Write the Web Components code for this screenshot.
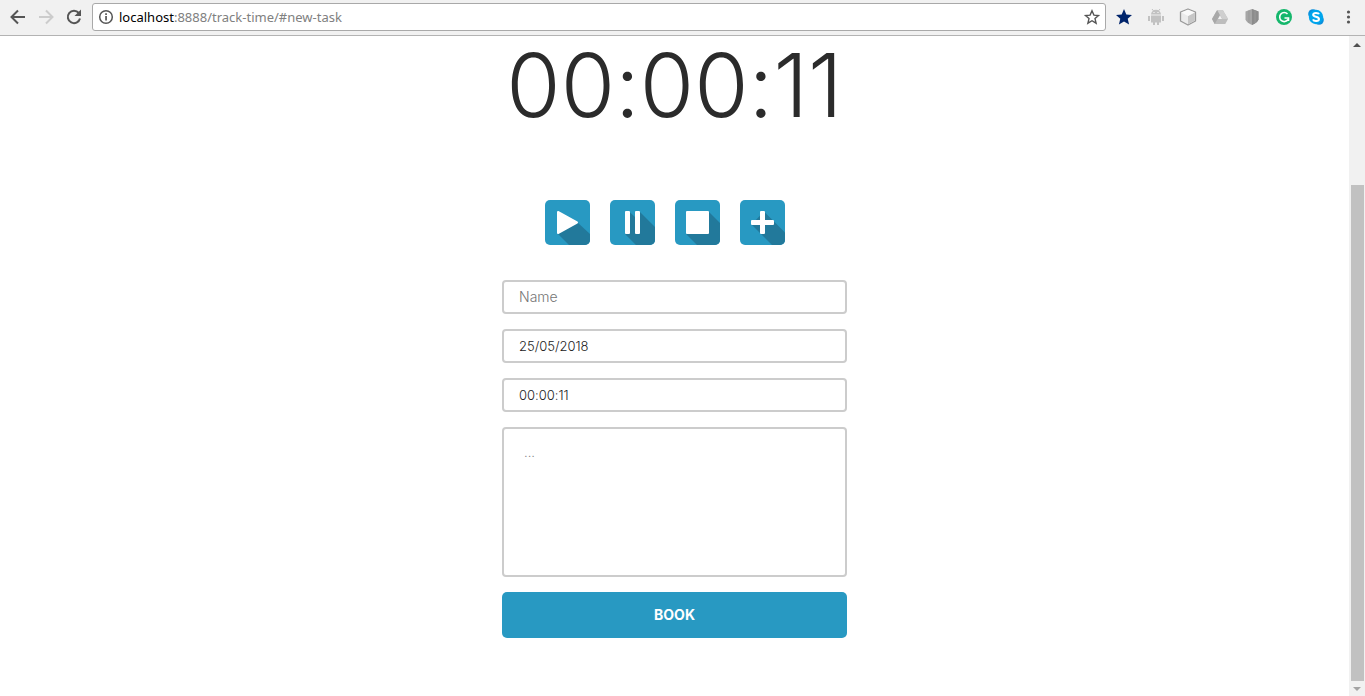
<!DOCTYPE html>
<html lang="en">
<head>
<meta charset="utf-8">
<title>Track time</title>
<style>
html, body { height: 100%; }
body { margin: 0; background: #fff; font-family: Inter, "Open Sans", sans-serif; color: #2b2b2b; }
</style>
</head>
<body>
<app-window>
  <browser-bar slot="bar"></browser-bar>
  <track-timer>00:00:11</track-timer>
  <timer-controls></timer-controls>
  <task-form></task-form>
</app-window>
<script>
const define = (name, html) => customElements.define(name, class extends HTMLElement {
  constructor() {
    super();
    const t = document.createElement('template');
    t.innerHTML = html;
    this.attachShadow({ mode: 'open' }).append(t.content.cloneNode(true));
  }
});

define('app-window', `
<style>
:host { display: flex; flex-direction: column; height: 100vh; overflow: hidden; }
.view { display: flex; flex: 1; min-height: 0; }
main { flex: 1; min-width: 0; overflow: hidden; display: flex; flex-direction: column; align-items: center; }
</style>
<slot name="bar"></slot>
<div class="view"><main><slot></slot></main><scroll-rail></scroll-rail></div>`);

define('scroll-rail', `
<style>
:host { display: flex; flex-direction: column; align-items: center; width: 16px; background: #f1f1f1; }
svg { display: block; width: 16px; height: 16px; flex: none; }
.down { height: 15px; }
.before { flex: 133; }
.thumb { flex: 496; width: 13px; background: #c1c1c1; }
</style>
<svg viewBox="0 0 16 16"><path d="M4 11L8 7L12 11Z" fill="#505050"/></svg>
<div class="before"></div><div class="thumb"></div>
<svg class="down" viewBox="0 0 16 15"><path d="M4 6L8 10L12 6Z" fill="#a3a3a3"/></svg>`);

define('browser-bar', `
<style>
:host { display: flex; align-items: center; height: 35px; flex: none; background: #f1f1f1; border-bottom: 1px solid #b3b3b3; }
nav { display: flex; gap: 8px; padding: 0 8px; }
button { display: block; border: 0; padding: 0; background: none; width: 20px; height: 20px; }
svg { display: block; width: 20px; height: 20px; }
.address { flex: 1; min-width: 0; box-sizing: border-box; display: flex; align-items: center; height: 28px; margin-bottom: 1px; background: #fff; border: 1px solid #a9a9a9; border-radius: 3px; padding: 0 3px; }
.url { flex: 1; color: #808080; font: 13px/24px "Noto Sans", sans-serif; padding: 0 0 1px 3px; }
.url b { color: #000; font-weight: 400; }
nav, .tools { margin-bottom: 1px; }
.tools { display: flex; gap: 12px; padding: 0 7px 0 8px; }
</style>
<nav>
<button aria-label="Back"><svg viewBox="0 0 20 20" fill="none" stroke="#555" stroke-width="2"><path d="M17 10H4M10 3.5L3.5 10L10 16.5"/></svg></button>
<button aria-label="Forward"><svg viewBox="0 0 20 20" fill="none" stroke="#ccc" stroke-width="2"><path d="M3 10H16M10 3.5L16.5 10L10 16.5"/></svg></button>
<button aria-label="Reload"><svg viewBox="0 0 20 20"><path d="M14.8 6A6.2 6.2 0 1 0 16 11.5" fill="none" stroke="#555" stroke-width="2"/><path d="M17 2.5V9H10.5Z" fill="#555"/></svg></button>
</nav>
<div class="address">
<svg viewBox="0 0 20 20"><circle cx="10" cy="10" r="6.3" fill="none" stroke="#555" stroke-width="1.5"/><path d="M9.2 9h1.7v4.5H9.2zM9.2 6.2h1.7v1.7H9.2z" fill="#555"/></svg>
<span class="url"><b>localhost</b>:8888/track-time/#new-task</span>
<button aria-label="Bookmark"><svg viewBox="0 0 20 20"><path d="M10 3.8L11.9 8.1L16.5 8.5L13 11.6L14.1 16.2L10 13.7L5.9 16.2L7 11.6L3.5 8.5L8.1 8.1Z" fill="none" stroke="#555" stroke-width="1.4"/></svg></button>
</div>
<div class="tools">
<button aria-label="Favourites"><svg viewBox="0 0 20 20"><path d="M10 2L12.3 7.5L18 8L13.7 11.8L15.1 17.6L10 14.5L4.9 17.6L6.3 11.8L2 8L7.7 7.5Z" fill="#00246b"/></svg></button>
<button aria-label="Android"><svg viewBox="0 0 20 20" fill="#c2c2c2"><path d="M5 7.5A5 4.7 0 0 1 15 7.5ZM5 8.5H15V15.5H13V18H11V15.5H9V18H7V15.5H5ZM2 9H4V14H2ZM16 9H18V14H16Z"/><path d="M6 2L8 4.5M14 2L12 4.5" stroke="#c2c2c2"/><path d="M7.5 5h1v1h-1zM11.5 5h1v1h-1z" fill="#fff"/></svg></button>
<button aria-label="Box"><svg viewBox="0 0 20 20" stroke="#999" stroke-width="1.3" stroke-linejoin="round"><path d="M10 2L17.5 5V14L10 18L2.5 14V5Z" fill="#ececec"/><path d="M10 9V17.2L16.800 13.500V5.500Z" fill="#c7c7c7" stroke="none"/><path d="M3.500 5.500L10 9L16.500 5.500L10 2.800Z" fill="#fafafa" stroke="none"/></svg></button>
<button aria-label="Drive"><svg viewBox="0 0 20 20"><path d="M7.2 3H12.8L18 12L15.3 17H4.7L2 12Z" fill="#bdbdbd"/><path d="M7.2 3L10 8L4.7 17L2 12Z" fill="#a8a8a8"/><path d="M7.2 3H12.8L18 12H12.4Z" fill="#cfcfcf"/><path d="M10 8.5L12 12H8Z" fill="#f1f1f1"/></svg></button>
<button aria-label="Shield"><svg viewBox="0 0 20 20"><path d="M10 2L16.5 4.5V12.5Q15.5 15.5 10 18Q4.500 15.5 3.500 12.500V4.500Z" fill="#a6a6a6"/><path d="M10 2L16.500 4.500V12.500Q15.500 15.500 10 18Z" fill="#8c8c8c"/><path d="M7 3.500V16M13 3.500V16" stroke="#999"/></svg></button>
<button aria-label="Grammar"><svg viewBox="0 0 20 20"><circle cx="10" cy="10" r="8" fill="#15b76c"/><path d="M13.500 7A4.500 4.500 0 1 0 14 12.500M10.500 11H14.500V14" fill="none" stroke="#fff" stroke-width="1.600"/></svg></button>
<button aria-label="Skype"><svg viewBox="0 0 20 20"><circle cx="7" cy="7" r="4.800" fill="#0b8fdc"/><circle cx="13" cy="13" r="4.800" fill="#0b8fdc"/><circle cx="10" cy="10" r="7.200" fill="#00a5ec"/><path d="M13 7.300C12.500 5.800 7.400 5.200 7.200 7.700C7.100 10.200 13 9.200 13 12C13 14.700 7.700 14.700 7 12.400" fill="none" stroke="#fff" stroke-width="2"/></svg></button>
<button aria-label="Menu"><svg viewBox="0 0 20 20" fill="#555"><circle cx="10.500" cy="5" r="1.600"/><circle cx="10.500" cy="10" r="1.600"/><circle cx="10.500" cy="15" r="1.600"/></svg></button>
</div>`);

define('track-timer', `
<style>
:host { display: block; font-size: 88px; line-height: 98px; font-weight: 300; font-feature-settings: "calt" 0; }
</style><slot></slot>`);

define('timer-controls', `
<style>
:host { display: flex; padding: 66px 0 35px; }
button { display: block; width: 45px; height: 45px; margin-right: 20px; padding: 0; border: 0; border-radius: 5px; background: #2899c2; overflow: hidden; }
svg { display: block; width: 45px; height: 45px; }
.shade { fill: #22799b; }
.mark { fill: #fff; stroke: #fff; stroke-width: 2; stroke-linejoin: round; }
</style>
<button aria-label="Start"><svg viewBox="0 0 45 45"><path class="shade" d="M32 22L45 34V45H24L13 34Z"/><path class="mark" d="M13 12V33L32 22.500Z"/></svg></button>
<button aria-label="Pause"><svg viewBox="0 0 45 45"><path class="shade" d="M29.500 11.500L45 27V45H26L15.500 34.500L19 11.500L25 17Z"/><path class="mark" d="M16 12H19V33H16ZM26 12H29V33H26Z"/></svg></button>
<button aria-label="Stop"><svg viewBox="0 0 45 45"><path class="shade" d="M33.500 11.500L45 23V45H22L11.500 34.500Z"/><path class="mark" d="M12 12H33V33H12Z"/></svg></button>
<button aria-label="Add"><svg viewBox="0 0 45 45"><path class="shade" d="M24 11.500L33.500 21L45 32.500V45H32L11.500 24.500Z"/><path class="mark" d="M21 12H24V21H33V24H24V33H21V24H12V21H21Z"/></svg></button>`);

define('task-form', `
<style>
:host { display: block; width: 345px; max-width: 100%; }
form { display: flex; flex-direction: column; gap: 15px; }
input, textarea { display: block; box-sizing: border-box; width: 100%; margin: 0; border: 2px solid #ccc; border-radius: 4px; background: #fff; color: #222; font: 300 13px/16px Inter, sans-serif; font-feature-settings: "calt" 0; outline: 0; }
input { height: 34px; padding: 0 15px; }
textarea { height: 150px; padding: 15px 20px; resize: none; }
::placeholder { color: #757575; opacity: 1; }
input::placeholder { font-size: 14px; }
button { height: 46px; border: 0; border-radius: 5px; background: #2899c2; color: #fff; font: 700 14px/16px Inter, sans-serif; }
</style>
<form>
<input type="text" aria-label="Name" placeholder="Name">
<input type="text" aria-label="Date" value="25/05/2018">
<input type="text" aria-label="Time" value="00:00:11">
<textarea aria-label="Description" placeholder="..."></textarea>
<button type="button">BOOK</button>
</form>`);
</script>
</body>
</html>
